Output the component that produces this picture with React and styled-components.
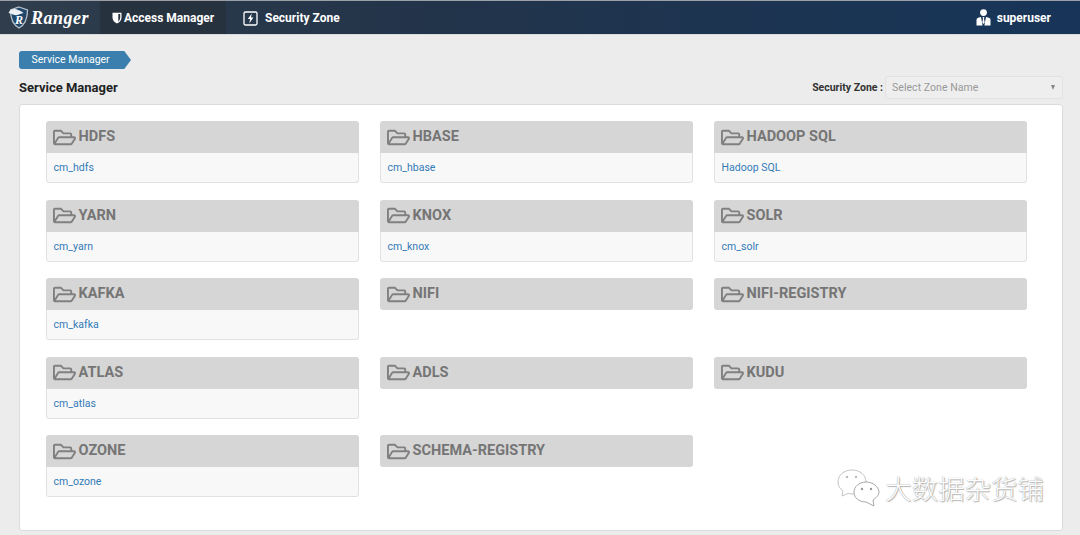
import React from 'react';
import styled, { createGlobalStyle } from 'styled-components';
import { FaRegFolderOpen } from 'react-icons/fa';

const GlobalStyle = createGlobalStyle`
  html, body {
    margin: 0;
    padding: 0;
    height: 535px;
    overflow: hidden;
    background: #ececec;
    font-family: Roboto, "Liberation Sans", sans-serif;
  }
`;

const Navbar = styled.header`
  height: 33px;
  border-top: 1px solid #9aa0a6;
  border-bottom: 1px solid #d8dadc;
  background: linear-gradient(to right, #2f3d4c 0%, #22344a 40%, #173559 100%);
  display: flex;
  align-items: stretch;
  color: #fff;
`;

const Brand = styled.div`
  width: 100px;
  display: flex;
  align-items: center;
  padding-left: 8px;
  box-sizing: border-box;
  gap: 2px;
`;

const BrandName = styled.span`
  font-family: "Liberation Serif", serif;
  font-style: italic;
  font-weight: 700;
  font-size: 18px;
  letter-spacing: 0.5px;
  padding-top: 1px;
`;

const NavItem = styled.div`
  display: flex;
  align-items: center;
  width: ${p => p.$width}px;
  padding-left: ${p => p.$pad}px;
  box-sizing: border-box;
  gap: ${p => p.$gap}px;
  font-size: 12px;
  font-weight: 700;
  background: ${p => (p.$active ? '#27323f' : 'transparent')};
`;

const UserBox = styled.div`
  margin-left: auto;
  margin-right: 29px;
  display: flex;
  align-items: center;
  gap: 6px;
  font-size: 12px;
  font-weight: 700;
`;

const Content = styled.main`
  padding: 16px 17px 0 19px;
`;

const Crumb = styled.div`
  width: 112px;
  height: 18px;
  padding-left: 12.5px;
  box-sizing: border-box;
  background: #3a7fad;
  color: #fff;
  font-size: 10.5px;
  line-height: 18px;
  border-radius: 3px 0 0 3px;
  clip-path: polygon(0 0, 94% 0, 100% 50%, 94% 100%, 0 100%);
`;

const TitleRow = styled.div`
  display: flex;
  justify-content: space-between;
  align-items: center;
  height: 23px;
  margin-top: 7px;
  margin-bottom: 5px;
`;

const Title = styled.h1`
  margin: 0;
  font-size: 13px;
  font-weight: 700;
  color: #222;
`;

const ZoneBox = styled.div`
  display: flex;
  align-items: center;
  gap: 2px;
`;

const ZoneLabel = styled.span`
  font-size: 10.5px;
  font-weight: 700;
  color: #333;
`;

const ZoneSelect = styled.div`
  width: 178px;
  height: 23px;
  box-sizing: border-box;
  padding: 0 7px 0 6px;
  display: flex;
  align-items: center;
  justify-content: space-between;
  background: #eeeeee;
  border: 1px solid #e2e2e2;
  border-radius: 3px;
  font-size: 10.5px;
  letter-spacing: 0.05px;
  color: #999;
`;

const Caret = styled.span`
  width: 0;
  height: 0;
  border-left: 2.5px solid transparent;
  border-right: 2.5px solid transparent;
  border-top: 5px solid #888;
`;

const Panel = styled.section`
  position: relative;
  height: 427px;
  box-sizing: border-box;
  padding: 16px 26px 0;
  background: #fff;
  border: 1px solid #dcdcdc;
  border-radius: 3px;
  display: grid;
  grid-template-columns: repeat(3, 313px);
  grid-auto-rows: 62px;
  column-gap: 21px;
  row-gap: 16.6px;
`;

const Card = styled.div`
  align-self: start;
`;

const CardHead = styled.div`
  height: 32px;
  background: #d6d6d6;
  border-radius: ${p => (p.$alone ? '3px' : '3px 3px 0 0')};
  display: flex;
  align-items: center;
  gap: 3px;
  padding-left: 6.6px;
  color: #757575;
  font-size: 14.5px;
  font-weight: 700;
  line-height: 30px;
`;

const CardBody = styled.div`
  height: 30px;
  box-sizing: border-box;
  padding-left: 6.6px;
  background: #f8f8f8;
  border: 1px solid #e2e2e2;
  border-top: none;
  border-radius: 0 0 3px 3px;
  font-size: 10.5px;
  line-height: 29px;
  color: #337ab7;
`;

const Watermark = styled.div`
  position: absolute;
  right: 18px;
  bottom: 23px;
  display: flex;
  align-items: center;
  gap: 4px;
  font-family: "Noto Sans CJK SC", sans-serif;
  font-weight: 300;
  font-size: 26.5px;
  color: #fff;
  text-shadow: 0 0 1px #8a8a8a, 1px 1px 1px #b8b8b8;
`;

const cards = [
  ['HDFS', 'cm_hdfs'],
  ['HBASE', 'cm_hbase'],
  ['HADOOP SQL', 'Hadoop SQL'],
  ['YARN', 'cm_yarn'],
  ['KNOX', 'cm_knox'],
  ['SOLR', 'cm_solr'],
  ['KAFKA', 'cm_kafka'],
  ['NIFI'],
  ['NIFI-REGISTRY'],
  ['ATLAS', 'cm_atlas'],
  ['ADLS'],
  ['KUDU'],
  ['OZONE', 'cm_ozone'],
  ['SCHEMA-REGISTRY'],
];

const RangerLogo = () => (
  <svg width="21" height="23" viewBox="0 0 21 23">
    <path d="M11 1 L19.5 4 C19.5 12 17.5 18.5 11 22 C4.5 18.5 2.5 12 2.5 4 Z" fill="#21486b" stroke="#b9c2ca" strokeWidth="1.3" />
    <path d="M0.5 7 C2 3 7 2 10 4 C12 4.5 14 5.5 15.5 7 L12 8 C10 9.5 6 9.5 4 8 Z" fill="#eef1f3" />
    <text x="11" y="18" textAnchor="middle" fontFamily="Liberation Serif" fontStyle="italic" fontWeight="700" fontSize="12" fill="#fff">R</text>
  </svg>
);

const HalfShield = () => (
  <svg width="10" height="12" viewBox="0 0 10 12">
    <path d="M0.5 0.7 H9.5 V5.5 C9.5 8.5 7.5 10.5 5 11.5 C2.5 10.5 0.5 8.5 0.5 5.5 Z" fill="#fff" />
    <path d="M6.3 2 H8.2 V5.5 C8.2 7.2 7.4 8.6 6.3 9.5 Z" fill="#27323f" />
  </svg>
);

const ZoneIcon = () => (
  <svg width="15" height="16" viewBox="0 0 15 16">
    <rect x="1" y="2" width="13" height="13" rx="1.5" fill="none" stroke="#fff" strokeWidth="1.3" />
    <path d="M8.8 3.5 L4.8 9 H7.2 L6.2 13.5 L10.4 7.4 H8 Z" fill="#fff" />
  </svg>
);

const UserIcon = () => (
  <svg width="15" height="17" viewBox="0 0 15 17">
    <circle cx="7.5" cy="3.6" r="3.4" fill="#fff" />
    <path d="M0.5 16.5 V11 C0.5 9.3 2 8.4 5 8 L6.6 16.5 Z M14.5 16.5 V11 C14.5 9.3 13 8.4 10 8 L8.4 16.5 Z" fill="#fff" />
    <path d="M6.6 8 H8.4 L8 9.6 L8.7 13.5 L7.5 15 L6.3 13.5 L7 9.6 Z" fill="#fff" />
  </svg>
);

const WeChatIcon = () => (
  <svg width="44" height="38" viewBox="0 0 44 38">
    <path d="M15 1 C7 1 1 6 1 13 C1 17 3 20 6 22 L5 27 L11 24.5 C12 24.5 14 25 15 25 C23 25 29 19 29 13 C29 6 23 1 15 1 Z" fill="#fff" stroke="#c4c4c4" />
    <path d="M29 13 C22 13 17 18 17 23 C17 29 22 33 29 33 L37 37 L36 31 C39 29 42 26 42 23 C42 18 36 13 29 13 Z" fill="#fff" stroke="#a8a8a8" />
    <circle cx="10" cy="8" r="1.2" fill="#bbb" />
    <circle cx="19" cy="8" r="1.2" fill="#bbb" />
    <circle cx="25" cy="20" r="1.2" fill="#999" />
    <circle cx="34" cy="20" r="1.2" fill="#999" />
  </svg>
);

export default function App() {
  return (
    <>
      <GlobalStyle />
      <Navbar>
        <Brand>
          <RangerLogo />
          <BrandName>Ranger</BrandName>
        </Brand>
        <NavItem $active $width={126} $pad={12} $gap={2}>
          <HalfShield />
          Access Manager
        </NavItem>
        <NavItem $width={130} $pad={17} $gap={7}>
          <ZoneIcon />
          Security Zone
        </NavItem>
        <UserBox>
          <UserIcon />
          superuser
        </UserBox>
      </Navbar>
      <Content>
        <Crumb>Service Manager</Crumb>
        <TitleRow>
          <Title>Service Manager</Title>
          <ZoneBox>
            <ZoneLabel>Security Zone :</ZoneLabel>
            <ZoneSelect>
              Select Zone Name
              <Caret />
            </ZoneSelect>
          </ZoneBox>
        </TitleRow>
        <Panel>
          {cards.map(([name, link]) => (
            <Card key={name}>
              <CardHead $alone={!link}>
                <FaRegFolderOpen size={23} color="#808080" />
                {name}
              </CardHead>
              {link && <CardBody>{link}</CardBody>}
            </Card>
          ))}
          <Watermark>
            <WeChatIcon />
            大数据杂货铺
          </Watermark>
        </Panel>
      </Content>
    </>
  );
}
